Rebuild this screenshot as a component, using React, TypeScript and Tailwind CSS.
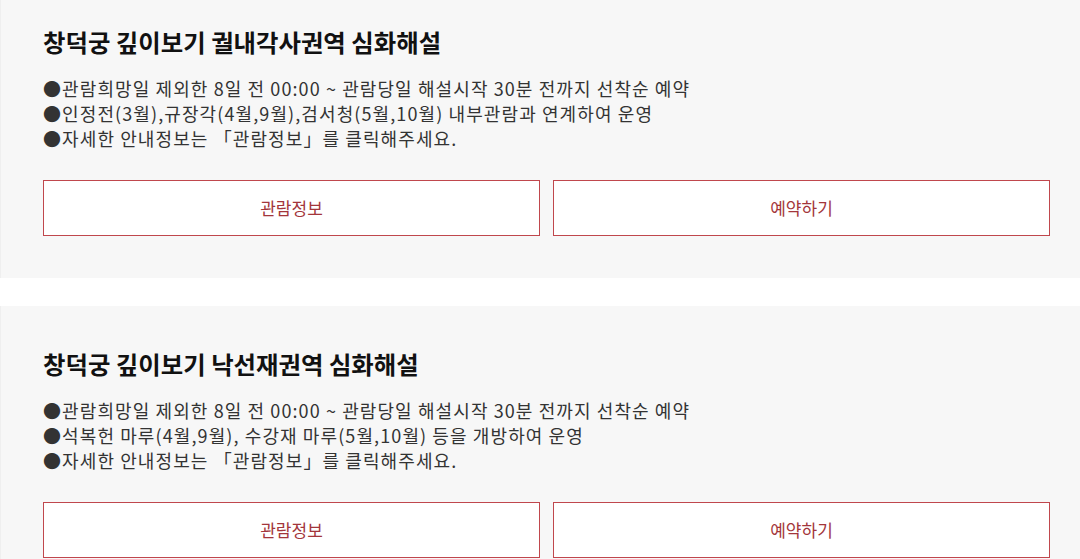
const PROGRAMS = [
  {
    title: "창덕궁 깊이보기 궐내각사권역 심화해설",
    lines: [
      "●관람희망일 제외한 8일 전 00:00 ~ 관람당일 해설시작 30분 전까지 선착순 예약",
      "●인정전(3월),규장각(4월,9월),검서청(5월,10월) 내부관람과 연계하여 운영",
      "●자세한 안내정보는 「관람정보」를 클릭해주세요.",
    ],
  },
  {
    title: "창덕궁 깊이보기 낙선재권역 심화해설",
    lines: [
      "●관람희망일 제외한 8일 전 00:00 ~ 관람당일 해설시작 30분 전까지 선착순 예약",
      "●석복헌 마루(4월,9월), 수강재 마루(5월,10월) 등을 개방하여 운영",
      "●자세한 안내정보는 「관람정보」를 클릭해주세요.",
    ],
  },
]

function ProgramCard({ title, lines }: { title: string; lines: string[] }) {
  return (
    <div className="bg-[#f7f7f7] border-l border-[#efefef] pt-[43px] pb-[42px] pl-[42px] pr-[30px]">
      <h3 className="text-[24.4px] leading-[30px] font-bold text-[#111]">{title}</h3>
      <ul className="mt-[19px] text-[18px] leading-[25px] tracking-[1.1px] text-[#333]">
        {lines.map((l) => (
          <li key={l}>{l}</li>
        ))}
      </ul>
      <div className="mt-[29px] grid grid-cols-2 gap-[13px]">
        <button className="h-[56px] bg-white border border-[#c0474d] text-[#a3363b] text-[17px]">관람정보</button>
        <button className="h-[56px] bg-white border border-[#c0474d] text-[#a3363b] text-[17px]">예약하기</button>
      </div>
    </div>
  )
}

export default function App() {
  return (
    <div
      className="w-[1080px] h-[559px] overflow-hidden bg-white"
      style={{ fontFamily: '"Noto Sans CJK KR", "Noto Sans", sans-serif' }}
    >
      <div className="-mt-[16px] flex flex-col gap-[28px]">
        {PROGRAMS.map((p) => (
          <ProgramCard key={p.title} {...p} />
        ))}
      </div>
    </div>
  )
}
